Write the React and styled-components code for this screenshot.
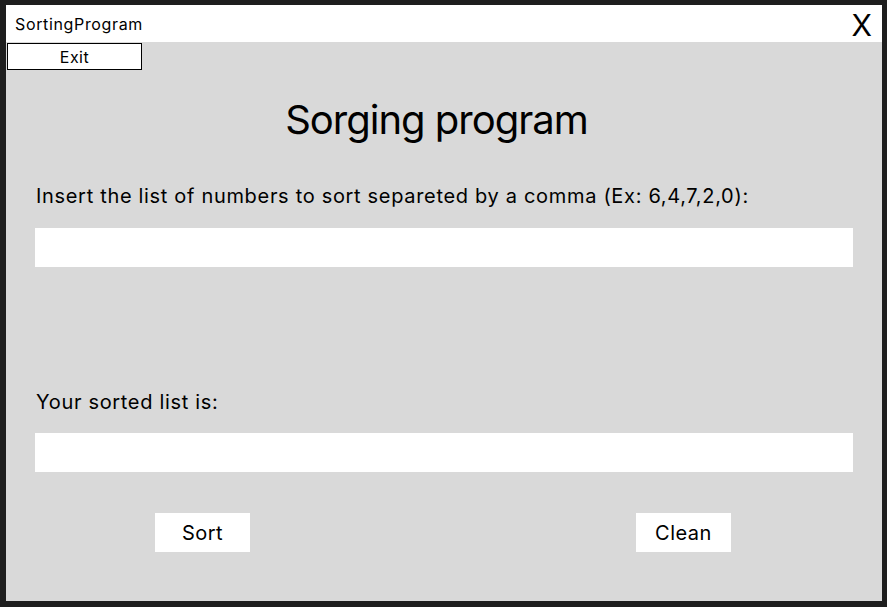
import React from "react";
import styled, { createGlobalStyle } from "styled-components";

const GlobalStyle = createGlobalStyle`
  html, body {
    margin: 0;
    padding: 0;
    background: #1e1e1e;
  }
  body {
    font-family: Inter, "Noto Sans", "Liberation Sans", sans-serif;
    color: #000;
    letter-spacing: 0.03em;
  }
`;

const App = () => (
  <>
    <GlobalStyle />
    <Window>
      <TitleBar>
        <TitleText>SortingProgram</TitleText>
        <CloseButton>X</CloseButton>
      </TitleBar>
      <Body>
        <ExitButton>Exit</ExitButton>
        <Heading>Sorging program</Heading>
        <Section>
          <Label>Insert the list of numbers to sort separeted by a comma (Ex: 6,4,7,2,0):</Label>
          <Field />
        </Section>
        <Section $top={123}>
          <Label>Your sorted list is:</Label>
          <Field $gap={19} />
        </Section>
        <Actions>
          <ActionButton>Sort</ActionButton>
          <ActionButton>Clean</ActionButton>
        </Actions>
      </Body>
    </Window>
  </>
);

const Window = styled.div`
  margin: 5px 0 0 6px;
  width: 876px;
  height: 596px;
  background: #d9d9d9;
  display: flex;
  flex-direction: column;
  overflow: hidden;
`;

const TitleBar = styled.div`
  height: 37px;
  background: #fff;
  display: flex;
  align-items: center;
  justify-content: space-between;
  padding: 0 10px 0 9px;
`;

const TitleText = styled.span`
  font-size: 16px;
  letter-spacing: 0.65px;
`;

const CloseButton = styled.span`
  font-size: 30px;
  line-height: 1;
  letter-spacing: 0;
  margin-top: 2px;
`;

const Body = styled.div`
  display: flex;
  flex-direction: column;
`;

const ExitButton = styled.div`
  margin: 1px 0 0 1px;
  width: 133px;
  height: 25px;
  border: 1px solid #000;
  background: #fff;
  font-size: 16px;
  display: flex;
  align-items: center;
  justify-content: center;
`;

const Heading = styled.h1`
  margin: 26px 0 0;
  padding-right: 15px;
  font-size: 40px;
  line-height: 48px;
  font-weight: 400;
  letter-spacing: -1px;
  text-align: center;
`;

const Section = styled.div`
  margin-top: ${(p) => p.$top || 40}px;
  padding: 0 29px;
  display: flex;
  flex-direction: column;
`;

const Label = styled.div`
  padding-left: 1px;
  font-size: 20px;
  line-height: 24px;
  letter-spacing: 0.68px;
`;

const Field = styled.div`
  margin-top: ${(p) => p.$gap || 20}px;
  height: 39px;
  background: #fff;
`;

const Actions = styled.div`
  margin-top: 41px;
  padding: 0 151px 0 149px;
  display: flex;
  justify-content: space-between;
`;

const ActionButton = styled.div`
  width: 95px;
  height: 39px;
  background: #fff;
  font-size: 20px;
  display: flex;
  align-items: center;
  justify-content: center;
`;

export default App;
